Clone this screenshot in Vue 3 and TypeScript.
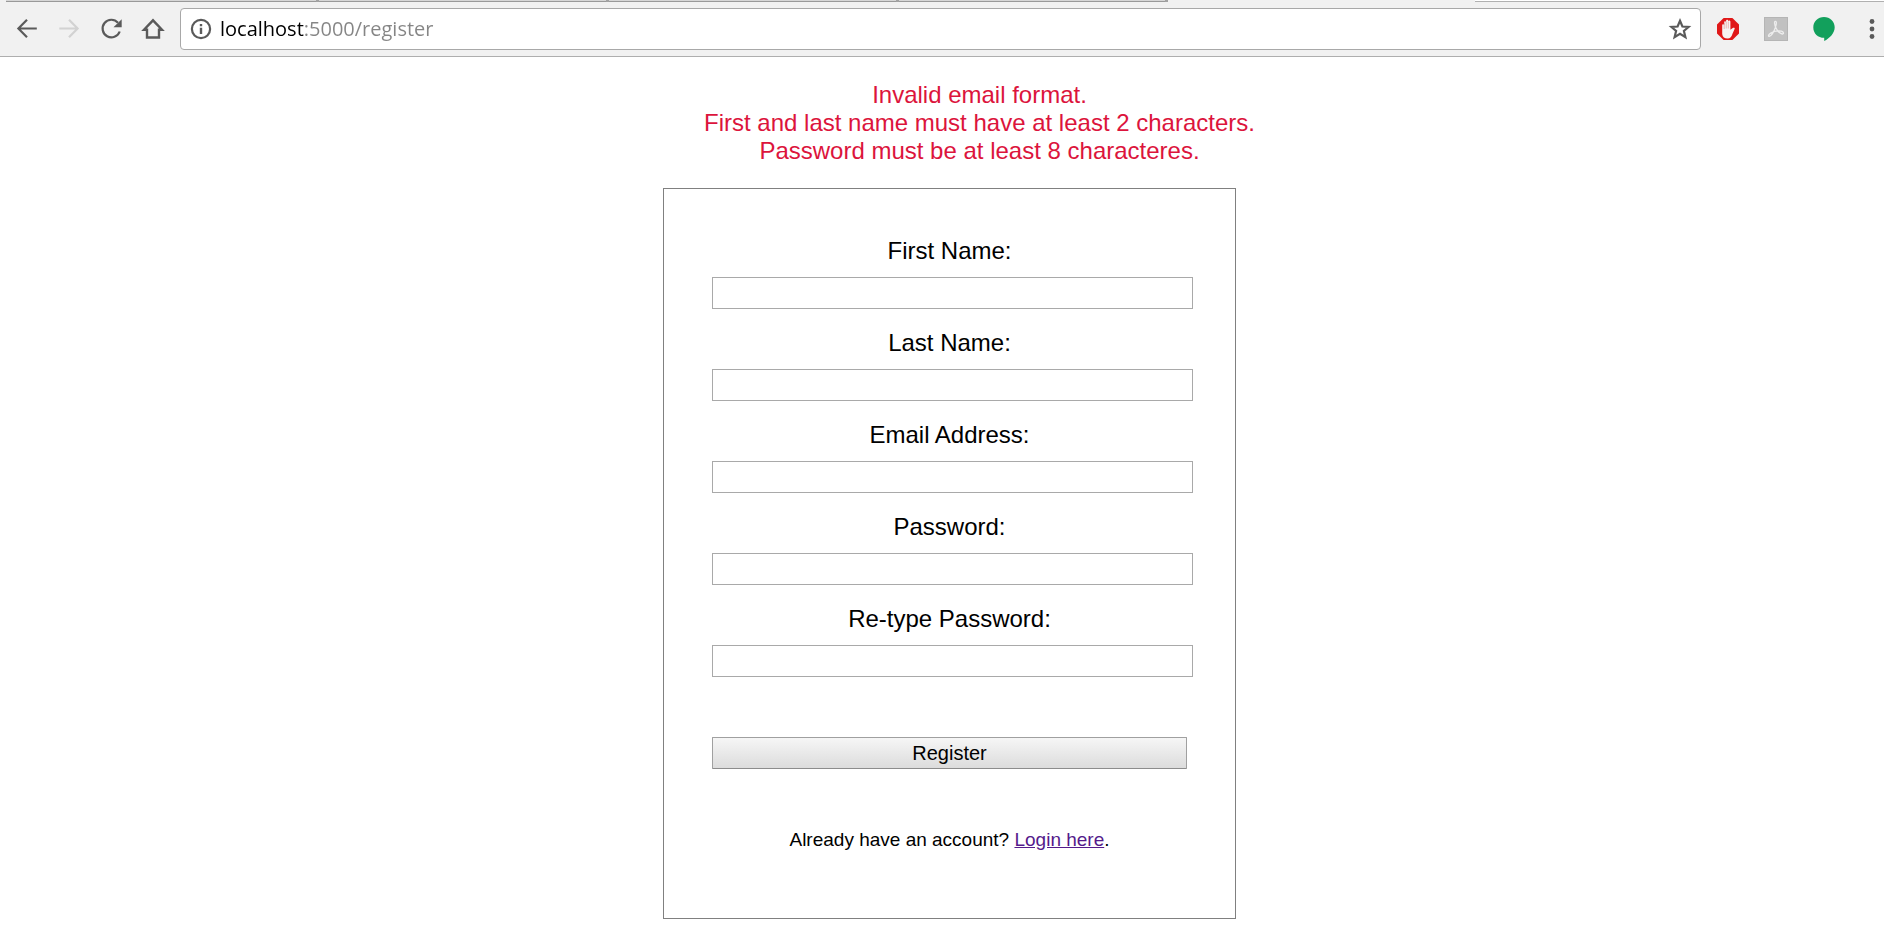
<script setup lang="ts">
import { reactive, ref } from 'vue'

interface Field {
  id: string
  label: string
  type: 'text' | 'password'
}

const address = ref<string>('localhost:5000/register')

const errors: string[] = [
  'Invalid email format.',
  'First and last name must have at least 2 characters.',
  'Password must be at least 8 characteres.',
]

const fields: Field[] = [
  { id: 'first_name', label: 'First Name:', type: 'text' },
  { id: 'last_name', label: 'Last Name:', type: 'text' },
  { id: 'email', label: 'Email Address:', type: 'text' },
  { id: 'password', label: 'Password:', type: 'password' },
  { id: 'confirm', label: 'Re-type Password:', type: 'password' },
]

const values = reactive<Record<string, string>>({
  first_name: '',
  last_name: '',
  email: '',
  password: '',
  confirm: '',
})
</script>

<template>
  <div class="browser">
    <header class="chrome">
      <div class="tabs" aria-hidden="true">
        <span class="tab tab-first"></span>
        <span class="tab"></span>
        <span class="tab"></span>
        <span class="tab tab-last"></span>
        <span class="tab-active"></span>
        <span class="tab-rest"></span>
      </div>
      <div class="toolbar">
        <nav class="nav" aria-label="Browser navigation">
          <button class="nav-btn" type="button" aria-label="Back">
            <svg width="24" height="24" viewBox="0 0 24 24" fill="none" stroke="#5a5a5a" stroke-width="2.2">
              <path d="M21.8 11.5H3.6M12 2.8L3.4 11.5L12 20.2" />
            </svg>
          </button>
          <button class="nav-btn" type="button" aria-label="Forward" disabled>
            <svg width="24" height="24" viewBox="0 0 24 24" fill="none" stroke="#d2d2d2" stroke-width="2.2">
              <path d="M2.3 11.5H20.4M12 2.8L20.6 11.5L12 20.2" />
            </svg>
          </button>
          <button class="nav-btn" type="button" aria-label="Reload">
            <svg width="24" height="24" viewBox="0 0 24 24">
              <path d="M19 5.7A8.8 8.8 0 1 0 20.7 14.5" fill="none" stroke="#5a5a5a" stroke-width="2.2" />
              <path d="M22.7 2.3V10.3H14.5Z" fill="#5a5a5a" />
            </svg>
          </button>
          <button class="nav-btn" type="button" aria-label="Home">
            <svg width="24" height="24" viewBox="0 0 24 24" fill="none" stroke="#5a5a5a" stroke-width="2.4">
              <path d="M3 12.7H6V20.5H18V12.7H21L12 3.3Z" />
            </svg>
          </button>
        </nav>
        <div class="omnibox">
          <svg class="info" width="22" height="22" viewBox="0 0 22 22">
            <circle cx="11" cy="11" r="9.1" fill="none" stroke="#5a5a5a" stroke-width="2.2" />
            <path d="M9.8 6H12.2V8.2H9.8ZM9.8 9.8H12.2V16H9.8Z" fill="#5a5a5a" />
          </svg>
          <input v-model="address" class="address" type="text" aria-label="Address" spellcheck="false" />
          <button class="star" type="button" aria-label="Bookmark this page">
            <svg width="24" height="24" viewBox="0 0 24 24" fill="none" stroke="#5a5a5a" stroke-width="2.2">
              <path d="M12 3.8L14.4 9.5L20.6 10L15.9 14L17.4 20.1L12 16.8L6.6 20.1L8.1 14L3.4 10L9.6 9.5Z" />
            </svg>
          </button>
        </div>
        <div class="extensions">
          <button class="ext" type="button" aria-label="Ad blocker">
            <svg width="24" height="24" viewBox="0 0 24 24">
              <path d="M7.6 1H16.4L23 7.6V16.4L16.4 23H7.6L1 16.4V7.6Z" fill="#e01818" />
              <path
                d="M8.2 13V5.4C8.2 4 10 4 10.1 5.4V3.7C10.2 2.3 12.1 2.3 12.2 3.7V4.3C12.4 3 14.3 3.1 14.4 4.5V12.8L16.4 11.2C17.6 10.2 19.2 10.8 18.6 12L16.6 16.6C15.5 20 14.4 21.6 11.6 21.6C8.6 21.6 6.4 20.2 6.2 17V8.2C6.2 7 8.1 7 8.2 8.2Z"
                fill="#f7f4f2"
              />
              <path d="M8.2 6V12M10.2 5V11.5M12.3 4.5V11.5" fill="none" stroke="#e08d88" stroke-width="0.6" />
            </svg>
          </button>
          <button class="ext" type="button" aria-label="PDF tools">
            <svg width="24" height="24" viewBox="0 0 24 24">
              <rect width="24" height="24" fill="#b5b5b5" />
              <rect x="1" y="1" width="22" height="22" fill="#c1c1c1" />
              <path
                d="M11.4 4.3C9.8 4.4 10.7 8.2 12 11C13.4 14 16 16.8 18.2 17C20.2 17.1 19.8 14.7 17.3 14.2C14.2 13.6 9.4 14.6 6.7 16.1C4.3 17.4 4 19.6 5.3 19.4C7.3 19 10.1 14.4 11.4 10.4C12.6 7 12.8 4.2 11.4 4.3Z"
                fill="none"
                stroke="#ededed"
                stroke-width="1.3"
              />
            </svg>
          </button>
          <button class="ext" type="button" aria-label="Hangouts">
            <svg width="24" height="24" viewBox="0 0 24 24">
              <path
                d="M12 0C18 0 22.7 4.6 22.7 10.3C22.7 16.3 17.5 21.5 12.2 24V20.8C6 20.8 1.3 16.3 1.3 10.4C1.3 4.6 6 0 12 0Z"
                fill="#12a05c"
              />
            </svg>
          </button>
          <button class="ext ext-menu" type="button" aria-label="Menu">
            <svg width="24" height="24" viewBox="0 0 24 24" fill="#5a5a5a">
              <circle cx="12" cy="4.5" r="2.4" />
              <circle cx="12" cy="12" r="2.4" />
              <circle cx="12" cy="19.5" r="2.4" />
            </svg>
          </button>
        </div>
      </div>
    </header>

    <main class="page">
      <ul class="errors">
        <li v-for="error in errors" :key="error">{{ error }}</li>
      </ul>
      <form class="card" @submit.prevent>
        <div v-for="field in fields" :key="field.id" class="field">
          <label :for="field.id">{{ field.label }}</label>
          <input :id="field.id" v-model="values[field.id]" :type="field.type" :name="field.id" />
        </div>
        <button class="submit" type="submit">Register</button>
        <p class="login">Already have an account? <a href="#login">Login here</a>.</p>
      </form>
    </main>
  </div>
</template>

<style>
body {
  margin: 0;
  background: #fff;
}
</style>

<style scoped>
.browser {
  min-height: 100vh;
  font-family: "Liberation Sans", Arial, sans-serif;
  color: #000;
}

button {
  margin: 0;
  padding: 0;
  border: 0;
  background: none;
  font-family: inherit;
}

svg {
  display: block;
}

.chrome {
  background: #f1f1f1;
  border-bottom: 1px solid #aeaeae;
}

.tabs {
  display: flex;
  height: 2px;
  padding-left: 6px;
}

.tab {
  box-sizing: border-box;
  width: 290px;
  background: linear-gradient(#d6d6d6 1px, #999 1px);
  border-right: 3px solid #a2a2a2;
}

.tab-first {
  width: 313px;
}

.tab-last {
  width: 269px;
}

.tab-active {
  width: 307px;
}

.tab-rest {
  flex: 1;
  background: linear-gradient(#fff 1px, #b0b0b0 1px);
}

.toolbar {
  display: flex;
  align-items: center;
  padding: 6px 0 6px 6px;
}

.nav {
  display: flex;
  margin-right: 6px;
}

.nav-btn {
  display: flex;
  align-items: center;
  justify-content: center;
  width: 42px;
  height: 42px;
}

.omnibox {
  box-sizing: border-box;
  display: flex;
  flex: 1;
  align-items: center;
  height: 42px;
  padding: 0 8px 0 9px;
  border: 1px solid #a8a8a8;
  border-radius: 4px;
  background: #fff;
}

.info {
  flex: none;
}

.address {
  flex: 1;
  min-width: 0;
  margin-left: 8px;
  padding: 0;
  border: 0;
  outline: 0;
  font-family: "Open Sans", "Noto Sans", sans-serif;
  font-size: 20px;
  line-height: 28px;
  color: transparent;
  /* Host name in black, port and path in grey. */
  background: linear-gradient(90deg, #000 84px, #858585 84px);
  background-clip: text;
}

.extensions {
  display: flex;
  margin-left: 3px;
}

.ext {
  display: flex;
  align-items: center;
  justify-content: center;
  width: 48px;
  height: 42px;
}

.ext-menu {
  width: 24px;
  margin-left: 12px;
}

.page {
  padding: 24px 0 12px 15px;
  font-size: 24px;
  line-height: 28px;
  text-align: center;
}

.errors {
  margin: 0 0 23px;
  padding: 0 0 0 60px;
  list-style: none;
  color: #dc143c;
}

.card {
  box-sizing: border-box;
  width: 100%;
  max-width: 573px;
  margin: 0 auto;
  padding: 48px 48px 66px;
  border: 1px solid #808080;
}

.field {
  display: flex;
  flex-direction: column;
  gap: 12px;
  margin-bottom: 20px;
}

.field input {
  box-sizing: border-box;
  width: calc(100% + 6px);
  height: 32px;
  padding: 2px 4px;
  border: 1px solid #a9a9a9;
  border-radius: 0;
  background: #fff;
  font-family: inherit;
  font-size: 20px;
}

.submit {
  box-sizing: border-box;
  display: block;
  width: 100%;
  height: 32px;
  margin-top: 60px;
  border: 1px solid #a0a0a0;
  border-bottom-color: #8c8c8c;
  border-radius: 1px;
  background: linear-gradient(#f6f6f6, #dcdcdc);
  font-size: 20px;
  line-height: 28px;
  color: #000;
}

.login {
  margin: 59px 0 0;
  font-size: 19px;
  line-height: 24px;
}

.login a {
  color: #551a8b;
}
</style>
